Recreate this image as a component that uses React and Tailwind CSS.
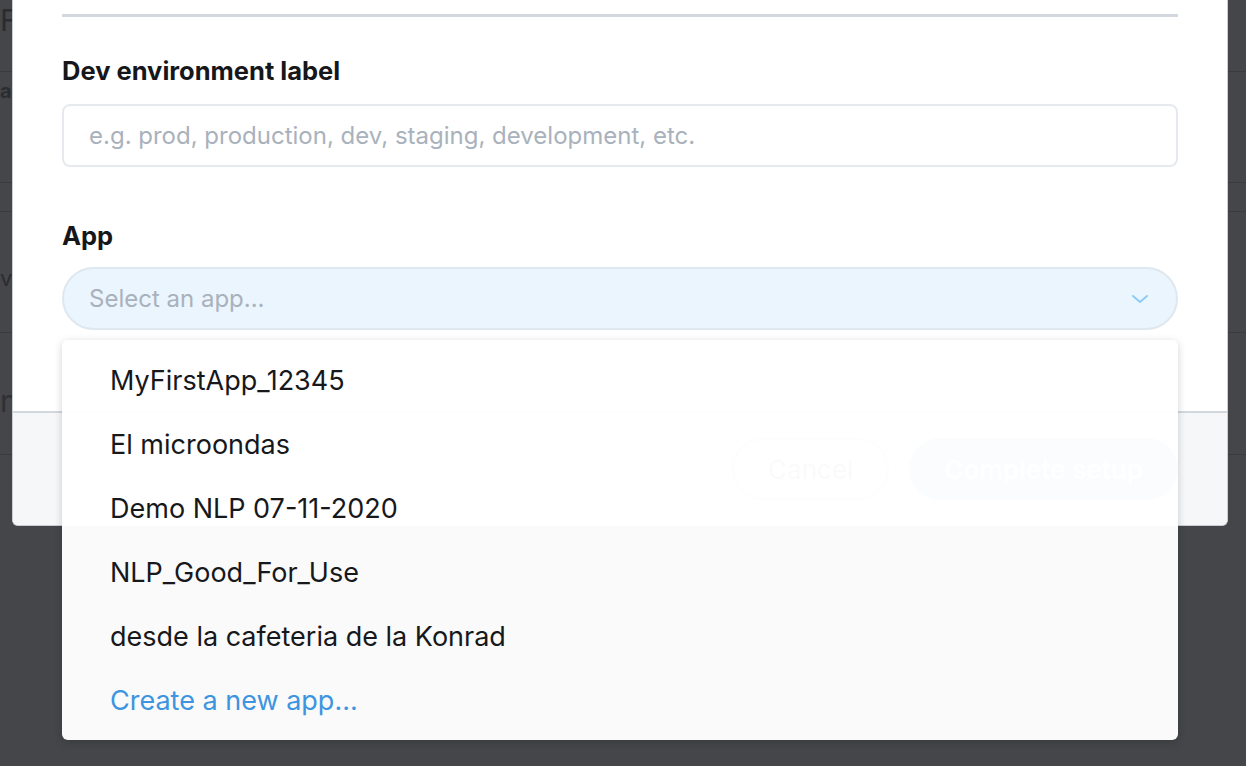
import React from "react";

const apps = [
  "MyFirstApp_12345",
  "El microondas",
  "Demo NLP 07-11-2020",
  "NLP_Good_For_Use",
  "desde la cafeteria de la Konrad",
];

const ChevronDown = () => (
  <svg width="18" height="10" viewBox="0 0 18 10" fill="none">
    <path d="M2 2l7 6 7-6" stroke="#8ecbf5" strokeWidth="2" strokeLinecap="round" strokeLinejoin="round" />
  </svg>
);

const BackgroundPage = () => (
  <div className="flex flex-col w-full text-[#2b2c30]">
    <div className="h-[72px] border-b border-[#3a3b3f] flex items-start pt-[2px]">
      <span className="text-[30px] leading-[36px]">Fields</span>
    </div>
    <div className="h-[111px] border-b border-[#3a3b3f] pt-[4px]">
      <span className="text-[20px] font-bold">app</span>
    </div>
    <div className="h-[29px] border-b border-[#3a3b3f]" />
    <div className="h-[121px] border-b border-[#3a3b3f] pt-[50px]">
      <span className="text-[22px]">vv</span>
    </div>
    <div className="h-[122px] border-b border-[#3a3b3f] pt-[46px]">
      <span className="text-[30px] text-[#2f3034]">nn</span>
    </div>
    <div className="h-[200px]" />
  </div>
);

const App = () => {
  return (
    <div
      className="relative w-full h-[766px] overflow-hidden bg-[#45464a]"
      style={{ fontFamily: "Inter, 'Noto Sans', sans-serif" }}
    >
      <BackgroundPage />

      <div className="absolute left-[12px] right-[18px] top-0 h-[526px] bg-white border border-t-0 border-[#c9ced5] rounded-b-[6px] flex flex-col overflow-hidden">
        <div className="flex-1 px-[49px] pt-[14px]">
          <div className="h-[3px] bg-[#d3d8de]" />

          <label className="block mt-[39px] text-[25.5px] font-bold text-[#16171a] leading-[30px]">
            Dev environment label
          </label>
          <input
            type="text"
            placeholder="e.g. prod, production, dev, staging, development, etc."
            className="mt-[18px] w-full h-[63px] px-[25px] rounded-[8px] border-2 border-[#e6eaee] text-[24px] text-[#222] placeholder:text-[#a9b2bc] outline-none"
          />

          <label className="block mt-[54px] text-[25.5px] font-bold text-[#16171a] leading-[30px]">
            App
          </label>
          <div className="mt-[16px] w-full h-[63px] pl-[25px] pr-[27px] rounded-full border-2 border-[#dfe8ef] bg-[#ebf5fd] flex items-center justify-between">
            <span className="text-[24px] text-[#a9b2bc]">Select an app...</span>
            <ChevronDown />
          </div>
        </div>

        <div className="h-[114px] border-t-2 border-[#d3d8de] bg-[#f6f7f9] flex items-center justify-end gap-[20px] px-[49px]">
          <button className="h-[62px] px-[34px] rounded-full border-2 border-[#b9bfc7] bg-white text-[26px] text-[#2a2d33]">
            Cancel
          </button>
          <button className="h-[62px] px-[35px] rounded-full bg-[#3d94e0] text-[26px] font-semibold text-white">
            Complete setup
          </button>
        </div>
      </div>

      <div className="absolute left-[62px] top-[340px] w-[1116px] pt-[9px] pb-[7px] rounded-[6px] bg-white/[0.975] shadow-[0_2px_8px_rgba(0,0,0,0.18)] flex flex-col">
        {apps.map((name) => (
          <div key={name} className="h-[64px] px-[48px] flex items-center text-[27px] text-[#17181b]">
            {name}
          </div>
        ))}
        <div className="h-[64px] px-[48px] flex items-center text-[27px] text-[#3d94e0]">
          Create a new app...
        </div>
      </div>
    </div>
  );
};

export default App;
